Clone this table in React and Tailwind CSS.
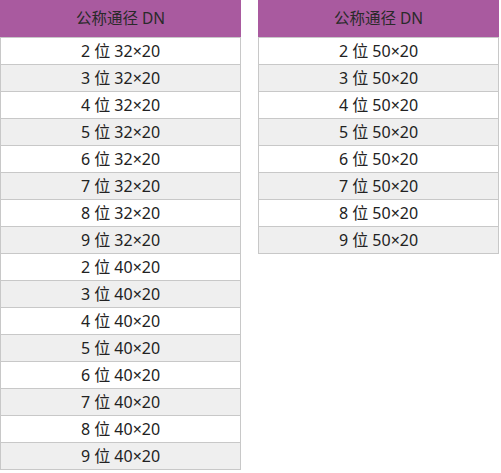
import React from "react";

const left = [
  "2 位 32×20", "3 位 32×20", "4 位 32×20", "5 位 32×20",
  "6 位 32×20", "7 位 32×20", "8 位 32×20", "9 位 32×20",
  "2 位 40×20", "3 位 40×20", "4 位 40×20", "5 位 40×20",
  "6 位 40×20", "7 位 40×20", "8 位 40×20", "9 位 40×20",
];
const right = [
  "2 位 50×20", "3 位 50×20", "4 位 50×20", "5 位 50×20",
  "6 位 50×20", "7 位 50×20", "8 位 50×20", "9 位 50×20",
];

function SizeTable({ rows }){
  return (
    <div className="w-[241px] border-x border-b border-[#c8c8c8]">
      <div className="h-[37px] -mx-px bg-[#a95a9f] flex items-center justify-center text-[15.5px] text-[#2a2a2a]">公称通径 DN</div>
      {rows.map((r, i)=> (
        <div key={r} className={"h-[27px] border-t border-[#c8c8c8] flex items-center justify-center text-[16px] text-[#222] " + (i % 2 ? "bg-[#efefef]" : "bg-white")}>
          {r}
        </div>
      ))}
    </div>
  );
}

export default function App(){
  return (
    <div className="w-[501px] h-[473px] bg-white flex items-start gap-[17px] font-['Noto_Sans','Noto_Sans_CJK_SC',sans-serif]">
      <SizeTable rows={left} />
      <SizeTable rows={right} />
    </div>
  );
}
